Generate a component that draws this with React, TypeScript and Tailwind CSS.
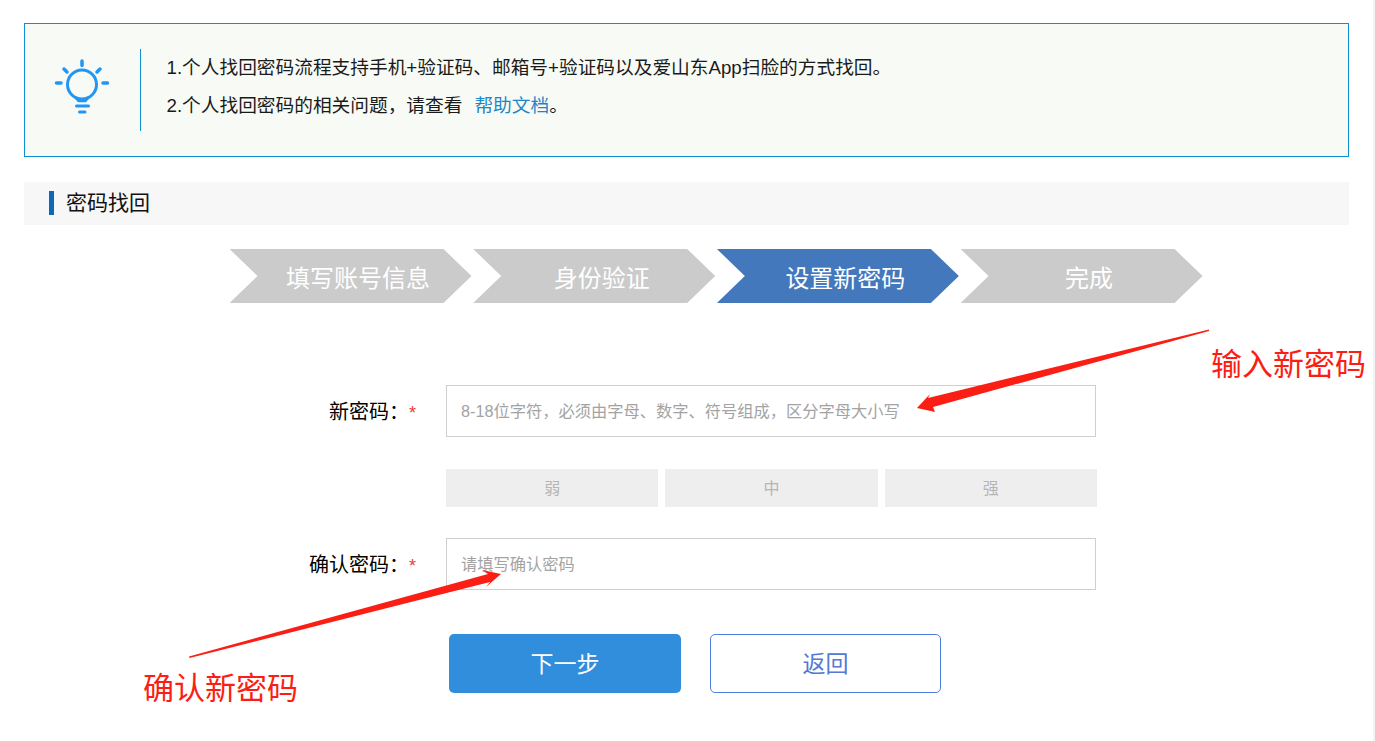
const font = "font-['Liberation_Sans','Noto_Sans_CJK_SC',sans-serif]";

const steps = [
  { title: "填写账号信息", active: false },
  { title: "身份验证", active: false },
  { title: "设置新密码", active: true },
  { title: "完成", active: false },
];

const BulbIcon = () => (
  <svg width="60" height="60" viewBox="0 0 60 60" fill="none" stroke="#2196f3" strokeLinecap="round">
    <circle cx="30" cy="27.500" r="14.500" strokeWidth="3" />
    <path d="M23.500 40.500c1.500 1.500 2.500 2.500 3 3.500h7c.5-1 1.500-2 3-3.500" strokeWidth="2.500" />
    <path d="M30 4v4.500M12 12l3 3M48 12l-3 3M4.500 26h4.500M51 26h4.500" strokeWidth="3.500" />
    <path d="M24.500 49h12" strokeWidth="3" />
    <path d="M27.500 55h5.500" strokeWidth="3" />
  </svg>
);

const Annotations = () => (
  <svg className="pointer-events-none absolute top-0 left-0" width="1375" height="741">
    <polygon points="1209,329.500 928,398 930,394 917,408 935,412 933,407 1209,331" fill="#fa1e14" />
    <polygon points="189,656.500 488,574 482,570 501,574 486,587 490,582 189.500,658" fill="#fa1e14" />
  </svg>
);

export default function App() {
  return (
    <div className={`relative h-[741px] w-[1375px] overflow-hidden border-r-2 border-[#f3f3f3] bg-white ${font}`}>
      <div className="flex flex-col px-6 pt-[23px]">
        <div className="flex h-[134px] items-center border border-[#0e8fd1] bg-[#f7faf5]">
          <div className="mb-[6px] flex w-[115px] shrink-0 items-center justify-center pr-px">
            <BulbIcon />
          </div>
          <div className="h-[82px] w-px bg-[#0e8fd1]" />
          <div className="flex flex-col pb-[6px] pl-[25.500px] text-[18.700px] leading-[38px] text-[#1a1a1a]">
            <p>1.个人找回密码流程支持手机+验证码、邮箱号+验证码以及爱山东App扫脸的方式找回。</p>
            <p>
              2.个人找回密码的相关问题，请查看
              <a className="ml-[12px] text-[#1c86c8]">帮助文档</a>。
            </p>
          </div>
        </div>

        <div className="mt-[25px] flex h-[43px] items-center bg-[#f7f7f7] pl-[25px]">
          <span className="mb-px h-6 w-[5px] bg-[#0b69b7]" />
          <span className="mb-[2px] ml-3 text-[21px] text-[#111]">密码找回</span>
        </div>

        <div className="mt-6 flex gap-[1.700px] pl-[205.500px]">
          {steps.map((step) => (
            <div
              key={step.title}
              className={`flex h-[54px] w-[242px] items-center justify-center pt-[5px] pl-[15px] text-[24px] text-white [clip-path:polygon(0_0,214px_0,100%_50%,214px_100%,0_100%,28px_50%)] ${
                step.active ? "bg-[#4378bd]" : "bg-[#cbcbcb]"
              }`}
            >
              {step.title}
            </div>
          ))}
        </div>

        <div className="mt-[82px] flex flex-col pl-[422px]">
          <div className="relative flex items-center">
            <label className="absolute right-[100%] mt-[2px] mr-[30px] text-[20px] whitespace-nowrap text-black">
              新密码：<span className="text-[18px] text-[#e8403a]">*</span>
            </label>
            <input
              readOnly
              placeholder="8-18位字符，必须由字母、数字、符号组成，区分字母大小写"
              className="h-[52px] w-[650px] border border-[#cfcfcf] bg-white px-[14px] text-[16.250px] outline-none placeholder:text-[#a3a3a3]"
            />
          </div>

          <div className="mt-8 flex w-[651px] gap-[7px] text-[16px] text-[#b5b5b5]">
            <div className="flex h-[38px] flex-1 items-center justify-center bg-[#eeeeee] pt-[2px]">弱</div>
            <div className="flex h-[38px] flex-1 items-center justify-center bg-[#eeeeee] pt-[2px]">中</div>
            <div className="flex h-[38px] flex-1 items-center justify-center bg-[#eeeeee] pt-[2px]">强</div>
          </div>

          <div className="relative mt-[31px] flex items-center">
            <label className="absolute right-[100%] mt-[2px] mr-[30px] text-[20px] whitespace-nowrap text-black">
              确认密码：<span className="text-[18px] text-[#e8403a]">*</span>
            </label>
            <input
              readOnly
              placeholder="请填写确认密码"
              className="h-[52px] w-[650px] border border-[#cfcfcf] bg-white px-[14px] text-[16.250px] outline-none placeholder:text-[#a3a3a3]"
            />
          </div>

          <div className="mt-11 flex gap-[29px] pl-[3px]">
            <button className="h-[59px] w-[232px] rounded-[5px] bg-[#318edd] pt-[2px] text-[23px] text-white">下一步</button>
            <button className="h-[59px] w-[231px] rounded-[5px] border border-[#4f7fdc] bg-white pt-[2px] text-[23px] text-[#5478d4]">
              返回
            </button>
          </div>
        </div>
      </div>

      <Annotations />
      <span className="absolute top-[343px] left-[1211px] text-[31px] leading-[44px] whitespace-nowrap text-[#fa1e14]">输入新密码</span>
      <span className="absolute top-[667px] left-[143px] text-[31px] leading-[44px] whitespace-nowrap text-[#fa1e14]">确认新密码</span>
    </div>
  );
}
